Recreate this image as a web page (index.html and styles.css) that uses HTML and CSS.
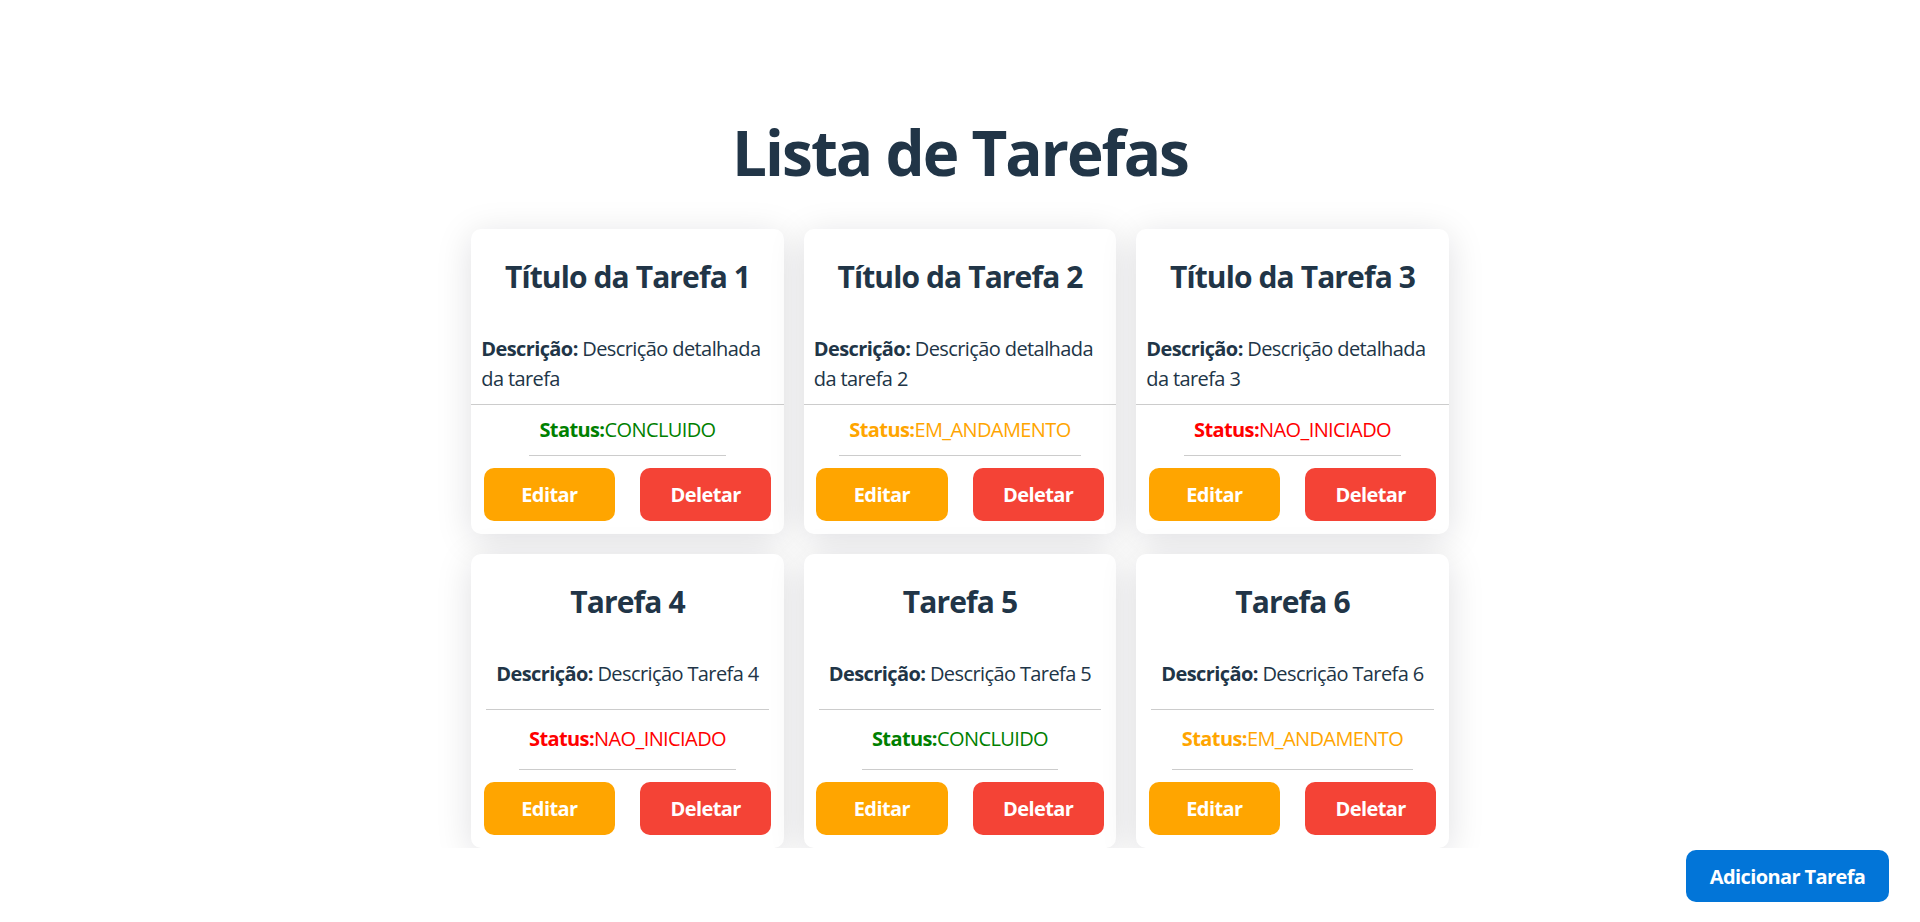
FILE: index.html
```html
<!DOCTYPE html>
<html lang="pt-BR">
<head>
<meta charset="utf-8">
<title>Lista de Tarefas</title>
<link rel="stylesheet" href="styles.css">
</head>
<body>
<main class="page">
  <h1 class="page-title">Lista de Tarefas</h1>
  <section class="task-grid">
    <article class="card">
      <h2 class="card-title">Título da Tarefa 1</h2>
      <p class="desc"><strong>Descrição:</strong> Descrição detalhada da tarefa</p>
      <div class="status status-done"><strong>Status:</strong><span>CONCLUIDO</span></div>
      <div class="actions"><button class="btn btn-edit">Editar</button><button class="btn btn-delete">Deletar</button></div>
    </article>
    <article class="card">
      <h2 class="card-title">Título da Tarefa 2</h2>
      <p class="desc"><strong>Descrição:</strong> Descrição detalhada da tarefa 2</p>
      <div class="status status-progress"><strong>Status:</strong><span>EM_ANDAMENTO</span></div>
      <div class="actions"><button class="btn btn-edit">Editar</button><button class="btn btn-delete">Deletar</button></div>
    </article>
    <article class="card">
      <h2 class="card-title">Título da Tarefa 3</h2>
      <p class="desc"><strong>Descrição:</strong> Descrição detalhada da tarefa 3</p>
      <div class="status status-todo"><strong>Status:</strong><span>NAO_INICIADO</span></div>
      <div class="actions"><button class="btn btn-edit">Editar</button><button class="btn btn-delete">Deletar</button></div>
    </article>
    <article class="card">
      <h2 class="card-title">Tarefa 4</h2>
      <p class="desc"><strong>Descrição:</strong> Descrição Tarefa 4</p>
      <div class="status status-todo"><strong>Status:</strong><span>NAO_INICIADO</span></div>
      <div class="actions"><button class="btn btn-edit">Editar</button><button class="btn btn-delete">Deletar</button></div>
    </article>
    <article class="card">
      <h2 class="card-title">Tarefa 5</h2>
      <p class="desc"><strong>Descrição:</strong> Descrição Tarefa 5</p>
      <div class="status status-done"><strong>Status:</strong><span>CONCLUIDO</span></div>
      <div class="actions"><button class="btn btn-edit">Editar</button><button class="btn btn-delete">Deletar</button></div>
    </article>
    <article class="card">
      <h2 class="card-title">Tarefa 6</h2>
      <p class="desc"><strong>Descrição:</strong> Descrição Tarefa 6</p>
      <div class="status status-progress"><strong>Status:</strong><span>EM_ANDAMENTO</span></div>
      <div class="actions"><button class="btn btn-edit">Editar</button><button class="btn btn-delete">Deletar</button></div>
    </article>
  </section>
</main>
<footer class="footer">
  <button class="btn-add">Adicionar Tarefa</button>
</footer>
</body>
</html>
```

FILE: styles.css
```css
html, body {
  margin: 0;
  padding: 0;
  background: #ffffff;
}

body {
  font-family: "Open Sans", "Noto Sans", sans-serif;
  font-size: 20px;
  line-height: 1.5;
  color: #213547;
  letter-spacing: -0.03em;
}

.page {
  height: calc(100vh - 74px);
  overflow: hidden;
  display: flex;
  flex-direction: column;
  align-items: center;
  box-sizing: border-box;
  padding-top: 117px;
  text-align: center;
}

.page-title {
  margin: 0 0 42px;
  font-size: 62px;
  line-height: 70px;
  font-weight: 700;
  letter-spacing: -0.032em;
  color: #213547;
}

.task-grid {
  flex: 1;
  min-height: 0;
  display: grid;
  grid-template-columns: repeat(3, 312.5px);
  grid-auto-rows: 1fr;
  gap: 20px;
  justify-content: center;
}

.card {
  display: flex;
  flex-direction: column;
  align-items: center;
  background: #ffffff;
  border-radius: 10px;
  box-shadow: 0 6px 36px rgba(10, 10, 30, 0.13);
}

.card-title {
  margin: 25px 0;
  font-size: 30px;
  line-height: 45px;
  font-weight: 700;
  letter-spacing: -0.03em;
  color: #213547;
}

.desc {
  margin: 0;
  padding: 10px;
  flex-grow: 1;
  border-bottom: 1px solid #cccccc;
  text-align: left;
  line-height: 30px;
}

.desc strong {
  font-weight: 700;
}

.status {
  margin: 0;
  padding: 10px;
  flex-grow: 1;
  display: flex;
  align-items: center;
  justify-content: center;
  border-bottom: 1px solid #cccccc;
  line-height: 30px;
}

.status strong {
  font-weight: 700;
}

.status-done { color: #008000; }
.status-progress { color: #ffa500; }
.status-todo { color: #ff0000; }

.actions {
  align-self: stretch;
  display: flex;
  justify-content: space-around;
  padding: 12px 0 13px;
}

.btn {
  width: 42%;
  height: 53px;
  border: none;
  border-radius: 10px;
  font-family: inherit;
  font-size: 20px;
  font-weight: 700;
  letter-spacing: -0.03em;
  color: #ffffff;
  cursor: pointer;
}

.btn-edit { background: #ffa500; }
.btn-delete { background: #f44336; }

.footer {
  height: 74px;
  box-sizing: border-box;
  display: flex;
  justify-content: flex-end;
  align-items: flex-start;
  padding: 2px 31px 0 0;
}

.btn-add {
  width: 203px;
  height: 52px;
  border: none;
  border-radius: 10px;
  background: #0275d8;
  color: #ffffff;
  font-family: inherit;
  font-size: 20px;
  font-weight: 700;
  letter-spacing: -0.03em;
  cursor: pointer;
}
```
